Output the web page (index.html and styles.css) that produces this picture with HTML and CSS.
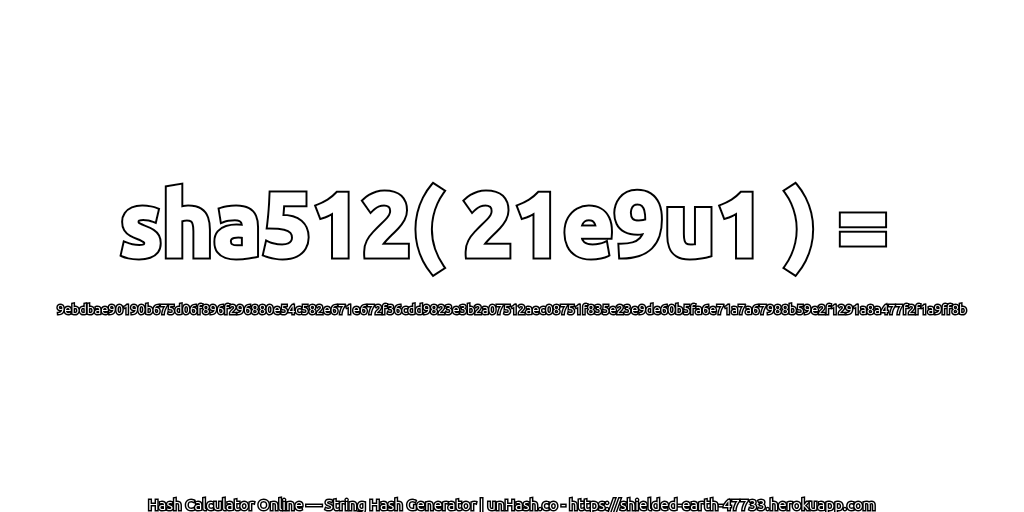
FILE: index.html
```html
<!DOCTYPE html>
<html lang="en">
<head>
    <meta charset="UTF-8">
    <title>sha512( 21e9u1 )</title>
    <link rel="stylesheet" href="styles.css">
</head>
<body>

<div class="wrap">
    <div class="main">
        <h1 class="title" data-text="sha512( 21e9u1 ) =">sha512( 21e9u1 ) =</h1>
        <p class="hash">9ebdbae90190b675d06f896f296880e54c582e671e672f36cdd9823e3b2a07512aec08751f835e23e9de60b5fa6e71a7a67988b59e2f1291a8a477f2f1a9ff8b</p>
    </div>
    <p class="foot">Hash Calculator Online — String Hash Generator | unHash.co - https://shielded-earth-47733.herokuapp.com</p>
</div>

</body>
</html>
```

FILE: styles.css
```css
html,body,h1,p{ margin: 0; padding: 0;}

body{
    background: #FFFFFF;
    font-family: "Ubuntu", "DejaVu Sans", sans-serif;
}
.wrap{
    width: 1024px;
    height: 512px;
    display: flex;
    flex-direction: column;
    align-items: center;
    overflow: hidden;
}
.wrap .main{
    flex: 1;
    padding-top: 11px;
    display: flex;
    flex-direction: column;
    justify-content: center;
    align-items: center;
}
.wrap .title{
    position: relative;
    font-size: 88.5px;
    font-weight: 700;
    line-height: 106px;
    margin-top: -20px;
    margin-bottom: 20px;
    margin-right: 16px;
    color: #000;
    -webkit-text-stroke: 7px #000;
    white-space: nowrap;
}
/* white layer over the black one leaves only the outline */
.wrap .title::after{
    content: attr(data-text);
    position: absolute;
    left: 0;
    top: 0;
    color: #FFFFFF;
    -webkit-text-stroke: 3px #FFFFFF;
}
.wrap .hash{
    font-size: 13.05px;
    line-height: 16px;
    margin-top: 4px;
    color: #FFFFFF;
    -webkit-text-stroke: 3px #000;
    paint-order: stroke fill;
    white-space: nowrap;
    will-change: transform;
}
.wrap .foot{
    font-size: 15.2px;
    line-height: 18px;
    margin-bottom: -2px;
    color: #FFFFFF;
    -webkit-text-stroke: 3px #000;
    paint-order: stroke fill;
    white-space: nowrap;
    will-change: transform;
}
```
